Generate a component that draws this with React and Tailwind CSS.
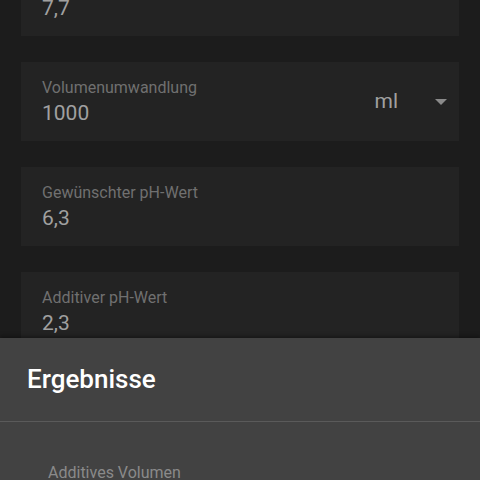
const fields = [
  { label: 'Aktueller pH-Wert', value: '7,7' },
  { label: 'Volumenumwandlung', value: '1000', unit: 'ml' },
  { label: 'Gewünschter pH-Wert', value: '6,3' },
  { label: 'Additiver pH-Wert', value: '2,3' },
];

export default function App() {
  return (
    <div className="relative h-[480px] w-[480px] overflow-hidden bg-[#1c1c1c] font-['Roboto',sans-serif]">
      <div className="-mt-[43px] flex flex-col gap-[26px] px-[21px]">
        {fields.map((f) => (
          <Field key={f.label} {...f} />
        ))}
      </div>

      {/* results sheet sits over the form */}
      <div className="absolute inset-x-0 bottom-0 top-[338px] bg-[#424242] shadow-[0_-2px_4px_rgba(0,0,0,0.35)]">
        <div className="flex h-[84px] items-center border-b border-[#5a5a5a] px-[27px]">
          <h2 className="text-[26px] font-medium text-white">Ergebnisse</h2>
        </div>
        <div className="flex items-start justify-between pl-[48px] pr-[80px] pt-[41px]">
          <span className="text-[16px] leading-[20px] text-[#8a8a8a]">Additives Volumen</span>
        </div>
      </div>
    </div>
  );
}

function Field({ label, value, unit }) {
  return (
    <div className="flex h-[79px] items-center bg-[#232323] pl-[21px] pr-[12px]">
      <div className="flex-1">
        <div className="text-[16px] leading-[20px] text-[#707070]">{label}</div>
        <div className="mt-[2px] text-[21px] leading-[26px] text-[#a0a0a0]">{value}</div>
      </div>
      {unit && (
        <div className="flex items-center">
          <span className="ml-[1px] text-[21px] text-[#a0a0a0]">{unit}</span>
          <svg width="12" height="6" viewBox="0 0 12 6" className="ml-[37px]">
            <path d="M0 0h12L6 6z" fill="#8a8a8a" />
          </svg>
        </div>
      )}
    </div>
  );
}
